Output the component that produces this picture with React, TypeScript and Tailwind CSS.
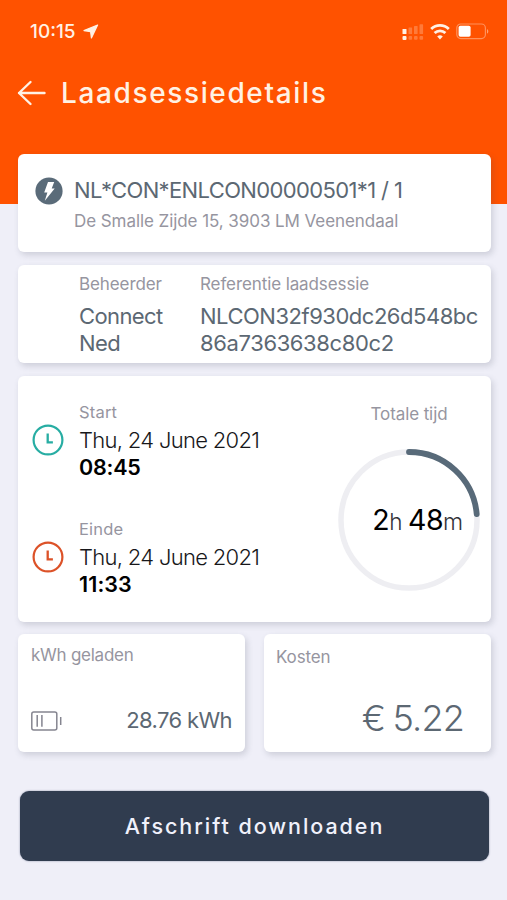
import type { ReactNode } from "react";

function Card({ className, children }: { className: string; children: ReactNode }) {
  return (
    <section className={`rounded-[6px] bg-white shadow-[2px_3px_6px_rgba(70,75,95,0.2)] ${className}`}>
      {children}
    </section>
  );
}

function StatusBar() {
  return (
    <div className="flex h-[63px] items-center justify-between pl-[30px] pr-[18px] text-[#fff1e4]">
      <div className="flex items-center gap-[7px]">
        <span className="text-[19px] font-medium leading-[24px]">10:15</span>
        <svg width="16" height="15" viewBox="0 0 16 15">
          <path d="M14.6 1 1 6.6 7.6 7.7 8.4 14Z" fill="currentColor" stroke="currentColor" strokeWidth="1.2" strokeLinejoin="round" />
        </svg>
      </div>
      <div className="flex items-center gap-[6px]">
        <svg width="22" height="18" viewBox="0 0 22 18" fill="currentColor">
          <rect x="0.5" y="6" width="4" height="5" rx="0.6" />
          <rect x="0.5" y="12.9" width="4" height="4" rx="1" />
          <g opacity="0.25">
            <rect x="6.5" y="4.5" width="3.6" height="6.5" rx="0.6" />
            <rect x="12" y="3" width="3.6" height="8" rx="0.6" />
            <rect x="17.5" y="1.3" width="3.6" height="9.7" rx="0.6" />
            <rect x="6.5" y="12.9" width="3.6" height="3.8" rx="1" />
            <rect x="12" y="12.9" width="3.6" height="3.8" rx="1" />
            <rect x="17.5" y="12.9" width="3.6" height="3.8" rx="1" />
          </g>
        </svg>
        <svg width="20" height="16" viewBox="0 0 20 16" fill="none" stroke="currentColor" strokeWidth="2.8">
          <path d="M1.2 5a12.6 12.6 0 0 1 17.6 0" />
          <path d="M4.6 9a7.8 7.8 0 0 1 10.8 0" />
          <path d="M10 15.5 7.2 12.6a4 4 0 0 1 5.6 0Z" fill="currentColor" stroke="none" />
        </svg>
        <svg width="33" height="17" viewBox="0 0 33 17">
          <rect x="0.8" y="1" width="28.6" height="14.6" rx="4" fill="none" stroke="currentColor" strokeWidth="1.2" opacity="0.4" />
          <rect x="2.6" y="2.8" width="12" height="11" rx="1.8" fill="#fff" />
          <path d="M31 6v4.8c1.8-.8 1.8-4 0-4.8Z" fill="currentColor" opacity="0.5" />
        </svg>
      </div>
    </div>
  );
}

function Clock({ className }: { className: string }) {
  return (
    <svg width="32" height="32" viewBox="0 0 32 32" fill="none" stroke="currentColor" className={className}>
      <circle cx="16" cy="16" r="14.4" strokeWidth="2.2" />
      <path d="M15.7 9.5v8.9h5.2" strokeWidth="2.3" />
    </svg>
  );
}

function Moment({ label, time, color }: { label: string; time: ReactNode; color: string }) {
  return (
    <div className="flex">
      <Clock className={`mt-[24px] shrink-0 ${color}`} />
      <div className="ml-[15px]">
        <div className="text-[16.5px] leading-[24px] tracking-[0.2px] text-[#9695a0]">{label}</div>
        <div className="mt-[3px] text-[22px] font-light leading-[27px] tracking-[-0.7px] text-[#17171a]">
          Thu, 24 June 2021
        </div>
        <div className="text-[21.5px] font-semibold leading-[26px] tracking-[-0.2px] text-black">{time}</div>
      </div>
    </div>
  );
}

function TotalTime() {
  return (
    <div className="mt-[26px] flex w-[142px] flex-col items-center">
      <div className="text-[17px] leading-[24px] tracking-[-0.1px] text-[#9695a0]">Totale tijd</div>
      <div className="mt-[23px] grid place-items-center">
        <svg width="142" height="142" viewBox="0 0 142 142" fill="none" className="col-start-1 row-start-1">
          <circle cx="71" cy="71" r="68" stroke="#eeeef2" strokeWidth="5.5" />
          <path d="M71 3A68 68 0 0 1 138.7 65" stroke="#586a79" strokeWidth="5.8" strokeLinecap="round" />
        </svg>
        <div className="col-start-1 row-start-1 ml-[17px] mt-[2px] flex items-baseline whitespace-nowrap text-[28.5px] leading-[34px] tracking-[-0.5px] text-black">
          <span>2</span>
          <span className="text-[22.5px] font-light text-[#333338]">h</span>
          <span className="ml-[6px]">48</span>
          <span className="text-[23px] font-light text-[#333338]">m</span>
        </div>
      </div>
    </div>
  );
}

export default function App() {
  return (
    <div className="h-[900px] w-[507px] overflow-hidden bg-[#efeff8] font-['Inter','Liberation_Sans',sans-serif]">
      <header className="h-[204px] bg-[#ff5200]">
        <StatusBar />
        <div className="flex h-[60px] items-center pl-[17px] text-[#fff1e4]">
          <svg width="30" height="26" viewBox="0 0 30 26" fill="none" stroke="currentColor" strokeWidth="2.4" strokeLinecap="round" strokeLinejoin="round">
            <path d="M27.5 13H2M13.5 2 2 13l11.5 11" />
          </svg>
          <h1 className="ml-[14px] text-[28px] font-medium leading-[36px] tracking-[1.63px]">Laadsessiedetails</h1>
        </div>
      </header>

      <main className="relative -mt-[50px] px-[18px] pr-[16px]">
        <Card className="flex h-[98px] pl-[17px] pt-[22px]">
          <svg width="28" height="28" viewBox="0 0 28 28" className="mt-px shrink-0">
            <circle cx="14" cy="14" r="13.6" fill="#5a6b79" />
            <path d="M13 5h6.2l-2.5 6.4h3L9.8 23.8l2.6-8.3H9.2Z" fill="#fff" />
          </svg>
          <div className="ml-[11px] whitespace-nowrap">
            <div className="text-[22px] leading-[28px] tracking-[-0.63px] text-[#5c6873]">
              NL*CON*ENLCON00000501*1 / 1
            </div>
            <div className="mt-[5px] text-[17px] leading-[24px] tracking-[-0.07px] text-[#9695a0]">
              De Smalle Zijde 15, 3903 LM Veenendaal
            </div>
          </div>
        </Card>

        <Card className="mt-[13px] flex h-[98px] pl-[61px] pt-[7px]">
          <div className="w-[121px]">
            <div className="text-[17px] leading-[24px] tracking-[-0.1px] text-[#9695a0]">Beheerder</div>
            <div className="mt-[7px] w-[100px] text-[22px] leading-[27px] tracking-[-0.6px] text-[#5c6873]">
              Connect Ned
            </div>
          </div>
          <div>
            <div className="text-[17px] leading-[24px] tracking-[-0.1px] text-[#9695a0]">Referentie laadsessie</div>
            <div className="mt-[7px] text-[22px] leading-[27px] text-[#5c6873]">
              <div className="tracking-[-0.48px]">NLCON32f930dc26d548bc</div>
              <div className="tracking-[-0.38px]">86a7363638c80c2</div>
            </div>
          </div>
        </Card>

        <Card className="mt-[13px] flex h-[246px] justify-between pl-[14px] pr-[11px]">
          <div className="flex flex-col gap-[37px] pt-[24px]">
            <Moment label="Start" time="08:45" color="text-[#27ada3]" />
            <Moment label="Einde" time={<span className="tracking-[0.1px]">11:33</span>} color="text-[#dc5228]" />
          </div>
          <TotalTime />
        </Card>

        <div className="mt-[12px] grid grid-cols-2 gap-[19px]">
          <Card className="flex h-[118px] flex-col justify-between pb-[18px] pl-[13px] pr-[13px] pt-[9px]">
            <div className="text-[17px] leading-[24px] tracking-[-0.25px] text-[#9695a0]">kWh geladen</div>
            <div className="flex items-center justify-between">
              <svg width="32" height="20" viewBox="0 0 32 20" fill="none" stroke="#858590" strokeWidth="1.5" className="mt-px">
                <rect x="0.8" y="0.9" width="25" height="18" rx="2" />
                <path d="M6.2 4v11.8M10.9 4v11.8M29.7 6v8" />
              </svg>
              <span className="text-[22px] leading-[28px] tracking-[-0.6px] text-[#5c6873]">28.76 kWh</span>
            </div>
          </Card>
          <Card className="flex h-[118px] flex-col justify-between pb-[13px] pl-[12px] pr-[27px] pt-[11px]">
            <div className="text-[17px] leading-[24px] tracking-[-0.15px] text-[#9695a0]">Kosten</div>
            <div className="text-right text-[36px] font-light leading-[42px] tracking-[-0.8px] text-[#5c6873] [word-spacing:-2px]">
              € 5.22
            </div>
          </Card>
        </div>

        <button className="ml-[2px] mt-[39px] flex h-[70px] w-[469px] items-center justify-center rounded-[9px] bg-[#303c4f] text-[21.5px] font-medium tracking-[1.95px] text-[#f0f1fb] shadow-[0_0_2px_#8088a0]">
          Afschrift downloaden
        </button>
      </main>
    </div>
  );
}
